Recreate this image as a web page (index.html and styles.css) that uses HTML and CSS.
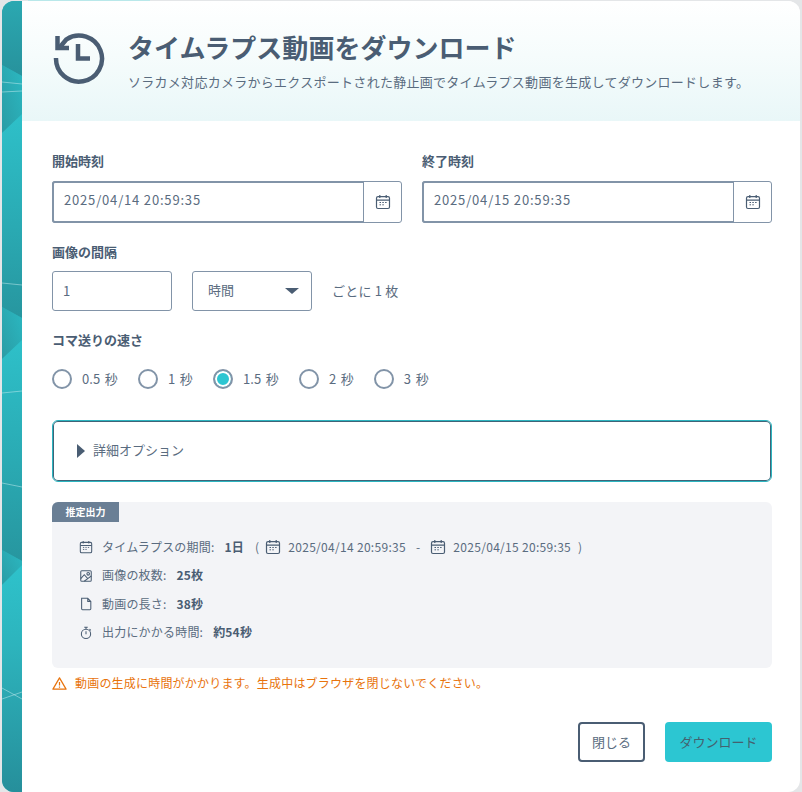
FILE: index.html
```html
<!DOCTYPE html>
<html lang="ja">
<head>
<meta charset="utf-8">
<title>タイムラプス動画をダウンロード</title>
<link rel="stylesheet" href="styles.css">
</head>
<body>
<div class="peek"></div>
<div class="modal">
  <svg class="stripe" viewBox="0 1 20 791" preserveAspectRatio="none" aria-hidden="true">
    <defs>
      <linearGradient id="gA" x1="0" y1="0" x2="0" y2="1"><stop offset="0" stop-color="#2ba8b1"/><stop offset="1" stop-color="#27929c"/></linearGradient>
      <linearGradient id="gB" x1="1" y1="0" x2="0" y2="1"><stop offset="0" stop-color="#2bb8c1"/><stop offset="1" stop-color="#2a9ca5"/></linearGradient>
      <linearGradient id="gC" x1="0" y1="0" x2="0" y2="1"><stop offset="0" stop-color="#2ec0c9"/><stop offset=".55" stop-color="#2aaab3"/><stop offset="1" stop-color="#27969f"/></linearGradient>
      <linearGradient id="gG" x1="0" y1="0" x2="0" y2="1"><stop offset="0" stop-color="#2ec2cb"/><stop offset=".35" stop-color="#2db4bd"/><stop offset="1" stop-color="#268f9b"/></linearGradient>
    </defs>
    <rect y="0" width="20" height="792" fill="#2aaab3"/>
    <polygon points="0,1 20,1 20,76 0,65" fill="url(#gA)"/>
    <polygon points="0,65 20,76 20,114 0,133" fill="url(#gB)"/>
    <polygon points="0,133 20,114 20,318 0,307" fill="url(#gC)"/>
    <polygon points="0,307 20,318 20,340 0,359" fill="url(#gB)"/>
    <polygon points="0,359 20,340 20,561 0,550" fill="url(#gC)"/>
    <polygon points="0,550 20,561 20,565 0,585" fill="url(#gB)"/>
    <polygon points="0,585 20,565 20,792 0,792" fill="url(#gG)"/>
    <path class="streak" d="M0 82 20 84M0 92 20 91M0 283 20 285M0 393 20 391M0 483 20 487M0 688 20 699M0 699 20 692"/>
  </svg>
  <div class="main">
    <header class="head">
      <svg class="head-icon" viewBox="0 0 56 56" aria-hidden="true">
        <path class="hi" d="M7 16 13.500 8.300A23 23 0 1 1 3 27"/>
        <path class="hi" d="M4.500 5V17H16"/>
        <path class="hi" d="M25 13V27.500H37"/>
      </svg>
      <div class="head-text">
        <h1>タイムラプス動画をダウンロード</h1>
        <p>ソラカメ対応カメラからエクスポートされた静止画でタイムラプス動画を生成してダウンロードします。</p>
      </div>
    </header>
    <div class="body">
      <div class="dates">
        <div class="field">
          <label class="label">開始時刻</label>
          <div class="date-group">
            <div class="date-input">2025/04/14 20:59:35</div>
            <div class="date-btn"><svg class="cal-lg" viewBox="0 0 16 16"><use href="#cal"/></svg></div>
          </div>
        </div>
        <div class="field">
          <label class="label">終了時刻</label>
          <div class="date-group">
            <div class="date-input">2025/04/15 20:59:35</div>
            <div class="date-btn"><svg class="cal-lg" viewBox="0 0 16 16"><use href="#cal"/></svg></div>
          </div>
        </div>
      </div>
      <label class="label label-interval">画像の間隔</label>
      <div class="interval">
        <div class="box box-num">1</div>
        <div class="box box-sel"><span class="sel-text">時間</span><span class="caret"></span></div>
        <span class="per">ごとに 1 枚</span>
      </div>
      <label class="label label-speed">コマ送りの速さ</label>
      <div class="radios">
        <span class="radio"><i class="dot"></i><span class="rt">0.5 秒</span></span>
        <span class="radio"><i class="dot"></i><span class="rt">1 秒</span></span>
        <span class="radio"><i class="dot on"></i><span class="rt">1.5 秒</span></span>
        <span class="radio"><i class="dot"></i><span class="rt">2 秒</span></span>
        <span class="radio"><i class="dot"></i><span class="rt">3 秒</span></span>
      </div>
      <div class="details"><span class="tri"></span><span class="dt-label">詳細オプション</span></div>
      <section class="estimate">
        <div class="badge">推定出力</div>
        <ul class="rows">
          <li><svg class="ic" viewBox="0 0 16 16"><use href="#cal"/></svg><span class="k">タイムラプスの期間:</span><b>1日</b><span class="paren">(</span><svg class="cal-sm" viewBox="0 0 16 16"><use href="#cal"/></svg><span class="dt">2025/04/14 20:59:35</span><span class="dash">-</span><svg class="cal-sm" viewBox="0 0 16 16"><use href="#cal"/></svg><span class="dt">2025/04/15 20:59:35</span><span class="paren2">)</span></li>
          <li><svg class="ic" viewBox="0 0 16 16"><rect class="il" x="2" y="2" width="12" height="12" rx="1.200"/><circle class="il" cx="10.500" cy="5.500" r="1.500"/><path class="il" d="M2 11 6 6.500 10 11 14 8M6 14 10 11"/></svg><span class="k">画像の枚数:</span><b>25枚</b></li>
          <li><svg class="ic" viewBox="0 0 16 16"><path class="il" d="M3 1.500H10L13.500 5V13.500A1 1 0 0 1 12.500 14.500H4A1 1 0 0 1 3 13.500ZM10 1.500V5H13.500"/></svg><span class="k">動画の長さ:</span><b>38秒</b></li>
          <li><svg class="ic" viewBox="0 0 16 16"><circle class="il" cx="8" cy="9" r="5.300"/><path class="il" d="M6 1.500H10M8 1.500V3.500M8 6V9.500M12 3.500 13.500 5"/></svg><span class="k">出力にかかる時間:</span><b>約54秒</b></li>
        </ul>
      </section>
      <div class="warn">
        <svg class="warn-ic" viewBox="0 0 16 16"><path class="wl" d="M8 2 15 14H1Z"/><path class="wl" d="M8 6.500V10M8 11.200V12.500"/></svg>
        <span class="warn-text">動画の生成に時間がかかります。生成中はブラウザを閉じないでください。</span>
      </div>
      <div class="actions">
        <button class="btn btn-close">閉じる</button>
        <button class="btn btn-dl">ダウンロード</button>
      </div>
    </div>
  </div>
</div>
<svg class="defs" aria-hidden="true">
  <symbol id="cal" viewBox="0 0 16 16">
    <rect class="il" x="1.500" y="2.700" width="13" height="11.800" rx="1.500"/>
    <path class="il" d="M1.500 6.200H14.500M4.800 1V4M11.200 1V4"/>
    <path class="il thin" d="M4.500 8.500H6M7.300 8.500H8.800M10.100 8.500H11.600M4.500 10.800H6M7.300 10.800H8.800"/>
  </symbol>
</svg>
</body>
</html>
```
FILE: styles.css
```css
* { box-sizing: border-box; }
html, body { margin: 0; padding: 0; }
body {
  width: 802px; height: 792px; overflow: hidden; background: #e4e6e8;
  font-family: "Noto Sans CJK JP", "Noto Sans", sans-serif; color: #4a5d73;
  padding: 1px 2px 0 2px;
}
.peek { position: absolute; left: 28px; top: 0; width: 122px; height: 1px; background: #b9e8ea; }
.defs { width: 0; height: 0; position: absolute; }
.il { fill: none; stroke: #4a5d73; stroke-width: 1.2; }
.il.thin { stroke-width: 1; }
.wl { fill: none; stroke: #e8730c; stroke-width: 1.3; stroke-linejoin: round; }
.hi { fill: none; stroke: #4a5d73; stroke-width: 4.5; }
.streak { fill: none; stroke: #c7eef1; stroke-width: 1; opacity: .5; }
.modal { display: flex; position: relative; width: 798px; height: 791px; background: #fff; border-radius: 12px; overflow: hidden; }
.stripe { width: 20px; height: 791px; flex: none; display: block; }
.main { flex: 1; display: flex; flex-direction: column; min-width: 0; }
.head {
  height: 120px; display: flex; padding: 30px 0 0 31px; gap: 19px;
  background: linear-gradient(180deg, #ffffff 0%, #f6fcfc 45%, #e9f7f8 100%);
}
.head-icon { width: 56px; height: 56px; flex: none; }
.head h1 { margin: -2px 0 0; font-size: 26px; line-height: 36px; font-weight: 700; letter-spacing: .03px; color: #4a5d73; }
.head p { margin: 7px 0 0; font-size: 13px; line-height: 20px; letter-spacing: .28px; color: #5a6c80; }
.body { padding: 30px 28px 0 30px; }
.label { display: block; font-size: 13px; line-height: 20px; font-weight: 700; color: #4a5d73; }
.dates { display: flex; gap: 20px; }
.field { width: 350px; }
.date-group { display: flex; height: 42px; margin-top: 10px; border: 1px solid #8294a8; border-radius: 3px; }
.date-input { flex: 1; border: solid #8294a8; border-width: 2px 1px 2px 2px; margin: -1px 0 -1px -1px; padding: 0 10px; font-size: 13px; line-height: 34px; letter-spacing: .82px; color: #5a6c80; border-radius: 3px 0 0 3px; }
.date-btn { width: 37px; display: flex; align-items: center; justify-content: center; }
.cal-lg { width: 16px; height: 16px; }
.label-interval { margin-top: 19px; }
.interval { display: flex; align-items: center; margin-top: 9px; height: 40px; }
.box { border: 1px solid #8294a8; border-radius: 3px; width: 120px; height: 40px; font-size: 13px; line-height: 38px; color: #5a6c80; }
.box-num { padding-left: 10px; }
.box-sel { margin-left: 20px; padding-left: 15px; display: flex; justify-content: space-between; padding-right: 12px; align-items: center; }
.sel-text { margin-top: -2px; }
.caret { width: 0; height: 0; border-left: 7px solid transparent; border-right: 7px solid transparent; border-top: 6px solid #4a5d73; }
.per { margin-left: 20px; padding-bottom: 2px; font-size: 13px; letter-spacing: .2px; color: #5a6c80; }
.label-speed { margin-top: 19px; }
.radios { display: flex; margin-top: 19px; gap: 20px; height: 20px; align-items: center; }
.radio { display: flex; align-items: center; gap: 10px; font-size: 13px; letter-spacing: .1px; word-spacing: 1.5px; color: #5a6c80; }
.rt { margin-bottom: 2px; }
.dot { width: 20px; height: 20px; border-radius: 50%; border: 2px solid #8294a8; background: #fff; display: block; }
.dot.on { background: #2cc6d2; box-shadow: inset 0 0 0 2px #fff; }
.details { margin-top: 31px; height: 62px; border: 1px solid #2cb5c0; box-shadow: inset 0 0 0 1px #3f6478; border-radius: 6px; display: flex; align-items: center; padding-left: 24px; font-size: 13px; letter-spacing: 0; color: #5a6c80; }
.dt-label { margin-bottom: 3px; }
.tri { width: 0; height: 0; border-top: 7px solid transparent; border-bottom: 7px solid transparent; border-left: 8px solid #4a5d73; margin-right: 8px; }
.estimate { margin-top: 20px; background: #f3f4f7; border-radius: 6px; height: 166px; position: relative; }
.badge { position: absolute; left: 0; top: 0; width: 67px; height: 20px; background: #6a7f95; color: #fff; font-size: 10px; font-weight: 700; line-height: 20px; text-align: center; border-radius: 6px 0 0 0; }
.rows { list-style: none; margin: 0; padding: 31px 0 0 27px; }
.rows li { display: flex; align-items: center; height: 28.5px; font-size: 12px; letter-spacing: .2px; color: #5a6c80; }
.rows li span, .rows b { margin-bottom: 2px; }
.ic { width: 14px; height: 14px; flex: none; margin-right: 9px; }
.rows b { font-weight: 700; color: #4a5d73; margin-left: 10px; }
.paren { margin: 0 6px 0 11px; }
.cal-sm { width: 16px; height: 16px; flex: none; margin-right: 7px; }
.dt { letter-spacing: .3px; }
.dash { margin: 0 10px; }
.paren2 { margin-left: 7px; }
.warn { margin-top: 5px; display: flex; align-items: center; gap: 8px; height: 20px; font-size: 12px; color: #e8730c; letter-spacing: .2px; }
.warn-text { margin-bottom: 2px; }
.warn-ic { width: 15px; height: 15px; }
.actions { display: flex; justify-content: flex-end; gap: 20px; margin-top: 29px; }
.btn { height: 40px; font-family: inherit; font-size: 13px; border-radius: 4px; color: #5a6c80; background: #fff; padding: 0 0 2px; }
.btn-close { width: 67px; border: 2px solid #4a5d73; }
.btn-dl { width: 107px; border: 0; background: #2cc6d2; color: #44616f; }
```
